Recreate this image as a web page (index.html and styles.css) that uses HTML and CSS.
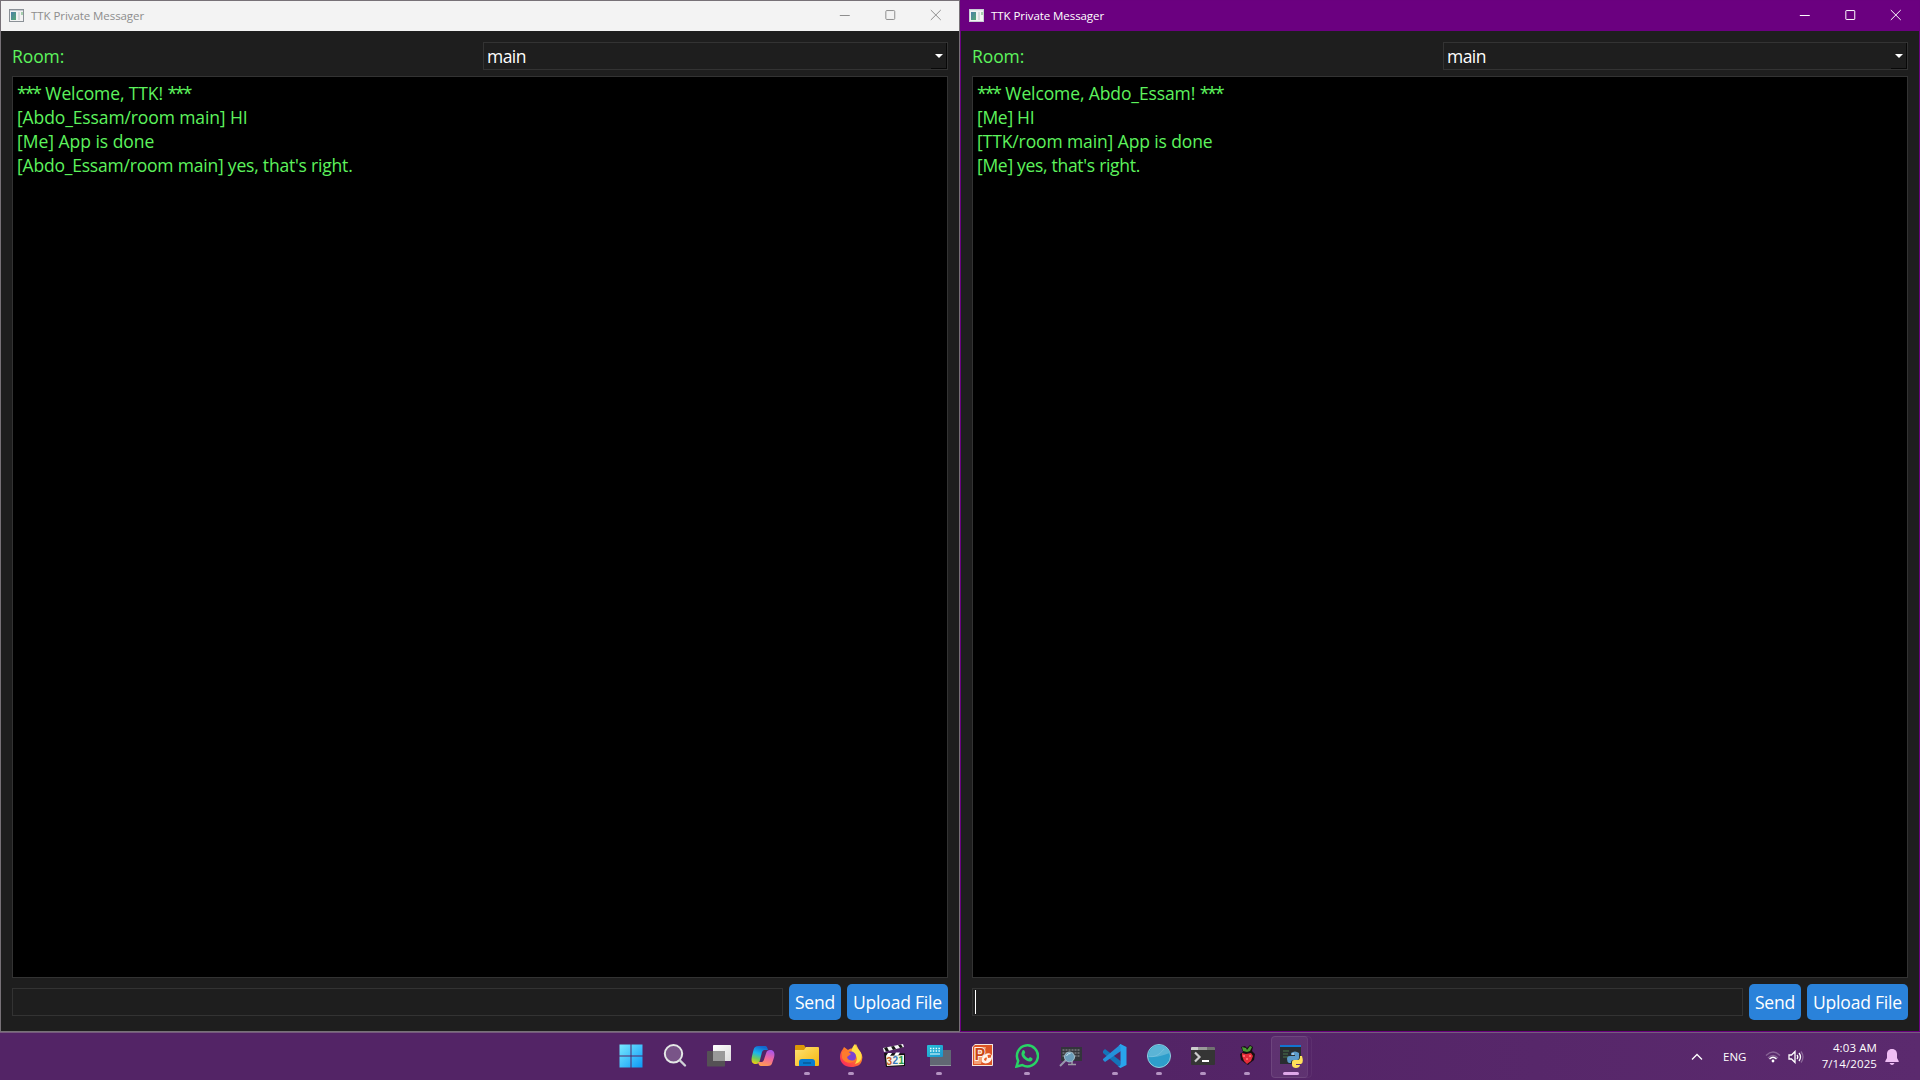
FILE: index.html
```
<!DOCTYPE html>
<html lang="en">
<head>
<meta charset="utf-8">
<title>TTK Private Messager</title>
<link rel="stylesheet" href="styles.css">
</head>
<body>
<div class="desktop">
  <main class="windows">
    <section class="window inactive">
      <header class="titlebar">
        <svg class="app-icon" viewBox="0 0 15 13"><rect x=".5" y=".5" width="14" height="12" fill="#f3f3f3" stroke="#8b9197"/><path d="M1 1.5h13" stroke="#c5cbd2"/><rect x="2" y="3" width="5" height="8" fill="url(#appg)"/><path d="M9 3h2v8H9z" fill="#d9dcde"/><path d="M12 3h2v3h-2z" fill="#a6cfae"/></svg>
        <h1 class="title">TTK Private Messager</h1>
        <div class="controls">
          <svg class="control" viewBox="0 0 46 30"><path d="M18 14.500h10"/></svg>
          <svg class="control" viewBox="0 0 46 30"><rect x="18" y="9.500" width="9" height="9" rx="1"/></svg>
          <svg class="control" viewBox="0 0 46 30"><path d="M18 9l10 10M28 9L18 19"/></svg>
        </div>
      </header>
      <div class="client">
        <div class="room-row">
          <label class="room-label">Room:</label>
          <div class="combo">main<span class="drop"></span></div>
        </div>
        <div class="chat">
          <p class="wide"><span class="stars">***</span> Welcome, TTK! <span class="stars">***</span></p>
          <p class="wide">[Abdo_Essam/room main] HI</p>
          <p class="wider">[Me] App is done</p>
          <p class="long">[Abdo_Essam/room main] yes, that's right.</p>
        </div>
        <div class="send-row">
          <div class="entry"></div>
          <button class="btn send">Send</button>
          <button class="btn upload">Upload File</button>
        </div>
      </div>
    </section>
    <section class="window active">
      <header class="titlebar">
        <svg class="app-icon" viewBox="0 0 15 13"><rect x=".5" y=".5" width="14" height="12" fill="#f3f3f3" stroke="#c9ced4"/><path d="M1 1.500h13" stroke="#e5e9ec"/><rect x="2" y="3" width="5" height="8" fill="url(#appg)"/><path d="M9 3h2v8H9z" fill="#d9dcde"/><path d="M12 3h2v3h-2z" fill="#a6cfae"/></svg>
        <h1 class="title">TTK Private Messager</h1>
        <div class="controls">
          <svg class="control" viewBox="0 0 46 30"><path d="M18 14.500h10"/></svg>
          <svg class="control" viewBox="0 0 46 30"><rect x="18" y="9.500" width="9" height="9" rx=".5"/></svg>
          <svg class="control" viewBox="0 0 46 30"><path d="M18 9l10 10M28 9L18 19"/></svg>
        </div>
      </header>
      <div class="client">
        <div class="room-row">
          <label class="room-label">Room:</label>
          <div class="combo">main<span class="drop"></span></div>
        </div>
        <div class="chat">
          <p class="wide"><span class="stars">***</span> Welcome, Abdo_Essam! <span class="stars">***</span></p>
          <p>[Me] HI</p>
          <p class="wide">[TTK/room main] App is done</p>
          <p>[Me] yes, that's right.</p>
        </div>
        <div class="send-row">
          <div class="entry"><span class="caret"></span></div>
          <button class="btn send">Send</button>
          <button class="btn upload">Upload File</button>
        </div>
      </div>
    </section>
  </main>

  <footer class="taskbar">
    <div class="tray-spacer"></div>
    <nav class="apps">
      <div class="app"><svg viewBox="0 0 24 24"><path fill="url(#win)" d="M.5.500h11v11H.5zM12.500.500h11v11h-11zM.5 12.500h11v11H.5zM12.500 12.500h11v11h-11z"/></svg></div>
      <div class="app"><svg viewBox="0 0 24 24"><circle cx="10.500" cy="9.800" r="8.700" fill="#795488" stroke="#e4e8e6" stroke-width="2"/><path d="M17 16.500l5 5" stroke="#cfd1d6" stroke-width="2.400" stroke-linecap="round"/></svg></div>
      <div class="app"><svg viewBox="0 0 24 24"><rect x="6" y="1" width="18" height="16" rx=".7" fill="url(#white)"/><rect y="7" width="18" height="15.500" rx=".7" fill="#555155"/><path d="M6 7h12v10H6z" fill="#999"/></svg></div>
      <div class="app"><svg viewBox="0 0 24 24"><path d="M7.500 2H14c1.800 0 2.300 1.200 3 4h-3c-2 0-2.800 1-3.500 4L9 16c-.8 3-2 4-4 4-4.500 0-5-3.500-4-8l1.500-6c.8-3 2-4 5-4z" fill="url(#cpa)"/><path d="M16.500 22H10c-1.800 0-2.300-1.200-3-4h3c2 0 2.800-1 3.500-4L15 9.500c.8-3 2-3.500 4-3.500 4.500 0 5 3.500 4 7.500L21.500 18c-.8 3-2 4-5 4z" fill="url(#cpb)"/></svg></div>
      <div class="app"><svg viewBox="0 0 24 24"><path d="M0 2q0-1 1-1h8l2 3v5H0z" fill="#dc9807"/><path d="M0 6h9l2-3h12q1 0 1 1v17q0 1-1 1H1q-1 0-1-1z" fill="url(#folder)"/><path d="M4 22v-4q0-3 3-3h10q3 0 3 3v4z" fill="#087bd0"/><path d="M8 19h8" stroke="#075796" stroke-width="1.500"/></svg><i></i></div>
      <div class="app"><svg viewBox="0 0 24 24"><path d="M5 3l4 3c1-1 4-2 6-1 0-2 1-4 2-5l3 6c3 3 4 7 3 10-1 5-5 7-11 7S1 19 1 13c0-3 1-6 3-8z" fill="url(#fire)"/><path d="M16 0c1 5 7 6 6.500 13-.5 4-3 6-6.500 7 4-6 1-10-3-11-1-4 1-7 3-9z" fill="#ffdf48"/><circle cx="12" cy="12.500" r="5" fill="#7b43d2"/><path d="M3 8c3-2 6-1 9 2l-4 3c1 4 5 4 8 3-2 4-10 4-13-2z" fill="#ff7a2d"/></svg><i></i></div>
      <div class="app"><svg viewBox="0 0 24 24"><path d="M1 9l21 .5V22L3 23z" fill="#111"/><path d="M3 12l18-1v10L4 22z" fill="#f8f5e7"/><path d="M0 4L20 0l1 3L1 8z" fill="#f8f8f8"/><path d="M1 4l3-1 2 4-3 .5zM8 2.500l3-.5 2 3-3 1zM15 1l3-.5 2 3-3 .5z" fill="#171717"/><path d="M5 9h4l-2 3H3zM13 8.500h4l-2 3h-4z" fill="#fff"/><g font-family="Liberation Sans, sans-serif" font-size="10" font-weight="bold"><text x="3.500" y="20.500" fill="#c75c24">3</text><text x="9.500" y="20.200" fill="#3676bb">2</text><text x="15.500" y="20" fill="#2c9b46">1</text></g></svg></div>
      <div class="app"><svg viewBox="0 0 24 24"><rect x="3" y="6" width="21" height="16" fill="#616773"/><path d="M3 21.500h21" stroke="#9395a0"/><rect y="1" width="16" height="12" rx="1" fill="url(#cyan)"/><path d="M3 4.500h10M3 7h10" stroke="#e9ffff" stroke-width="1.300" stroke-dasharray="1.500 1.300"/><path d="M3 10h10" stroke="#e9ffff"/></svg><i></i></div>
      <div class="app"><svg viewBox="0 0 24 24"><path d="M1 3l3-3h18v21q0 1-1 1H1z" fill="#f1e6df"/><path d="M2 3l2-2h17v20H2z" fill="#dd5524"/><path d="M3 3h12l-5 17H3z" fill="#f3a176"/><path d="M11 14c3-6 10-6 10-1 0 6-7 8-10 5z" fill="#fff3ea"/><path d="M13 16c0-2 2-3 3-2l-1 3zM16.500 11l3.500-.5v3l-3 .5z" fill="#e95a24"/><text x="3.500" y="16" fill="#c94614" stroke="#fff" stroke-width="1.500" paint-order="stroke" font-family="Liberation Sans, sans-serif" font-size="16" font-weight="bold">P</text></svg></div>
      <div class="app"><svg viewBox="0 0 24 24"><path d="M1.500 22.500l1.700-5.700A10.500 10.500 0 1 1 7.300 21z" fill="none" stroke="#28d366" stroke-width="2.500"/><path d="M7.500 6.500c1-.8 2-.5 2.700 2l-.9 2c1 2 2.200 3.200 4.200 4l1.500-1.500c2.500 1 2.700 1.300 2.500 2.500-.8 2.500-3.500 2.500-6 1-3-1.500-5.500-4.500-5-7.500z" fill="#28d366"/></svg><i></i></div>
      <div class="app"><svg viewBox="0 0 24 24"><path d="M2 3h21v14H2z" fill="#33353b"/><path d="M3.500 6h18M3.500 9h18M3.500 12h18" stroke="#66676d" stroke-width="2" stroke-dasharray="2 1"/><path d="M9 20.500h8M13 17v3" stroke="#9c9aa6" stroke-width="1.500"/><path d="M7 16l-6 6" stroke="#9999ae" stroke-width="2"/><circle cx="10.500" cy="13" r="5" fill="#6b9dba" stroke="#a5bfcb"/><path d="M7.500 12q1-3 4-2.500" fill="none" stroke="#c8e0ea"/></svg></div>
      <div class="app"><svg viewBox="0 0 24 24"><path d="M0 7l2-2 15.500 12V24L0 9z" fill="#1474b9"/><path d="M0 16l2 2L18 7V0L0 15z" fill="#2491da"/><path d="M17.500 0l6 3v18l-6 3-3-2q3 1 3-2V3q0-2-2-1z" fill="#29a4ec"/></svg><i></i></div>
      <div class="app"><svg viewBox="0 0 24 24"><circle cx="12" cy="12" r="11.500" fill="#2d9ecb" stroke="#93cede"/><path d="M1.500 12.500C8 14 15 12 22.800 9 21 4 17 1.300 12 1.300 6 1.300 1.500 6 1.500 12.500z" fill="#5bb4d6"/><path d="M1.500 12.500C8 13.500 12 11 17 5" fill="none" stroke="#83c8e1" stroke-width=".6"/></svg><i></i></div>
      <div class="app"><svg viewBox="0 0 24 24"><rect y="3" width="24" height="18" rx="1" fill="#353535"/><path d="M0 6V4q0-1 1-1h6v3z" fill="#ccc"/><path d="M7 3h9v3H7z" fill="#999"/><path d="M16 3h7q1 0 1 1v2h-8z" fill="#717171"/><path d="M4 8.500l4.500 4.500L4 17.500" fill="none" stroke="#ccc" stroke-width="2.200"/><path d="M11 17h7" stroke="#fff" stroke-width="2"/></svg><i></i></div>
      <div class="app"><svg viewBox="0 0 24 24"><path d="M6 3l4-1 2 2 3-3 3 2-1 4 3 3-1 6-4 3-2 2-3-2-4-3-1-6 3-2z" fill="#160e12"/><path d="M7 3l4 1 1 2 3-4 2 1-2 4-3 1-4-1z" fill="#4c9c35"/><path d="M7 9l4 1 5-1 2 3-2 5-4 3-3-3-2-5z" fill="#e42d39"/><path d="M8 11h2v2H8zM14 11h2v2h-2zM11 14h2v2h-2z" fill="#ff656a"/></svg><i></i></div>
      <div class="app current"><svg viewBox="0 0 24 24"><rect x="1" y="1" width="21" height="19" fill="#292d30"/><path d="M1 1h21v2H1z" fill="#1275d0"/><path d="M4 7h6M4 10h5M4 13h6" stroke="#3f5d43" stroke-width="1.500"/><path d="M12 9q4-3 8 0v5q0 2-2 2h-4q-2 0-2 3h-2q-2-1-2-4t3-3h5v-1h-4z" fill="#5c9aca"/><path d="M21 12h2q2 7-1 8h-5v1h4c0 4-8 4-8 0v-3q0-2 2-2h4q2 0 2-4z" fill="#ffe15a"/><circle cx="14" cy="10" r=".8" fill="#fff"/></svg><i></i></div>
    </nav>
    <div class="tray">
      <svg class="chevron" viewBox="0 0 12 8"><path d="M1 6.500l5-5 5 5"/></svg>
      <span class="lang">ENG</span>
      <svg class="wifi" viewBox="0 0 16 14"><path d="M1 5.500q7-7 14 0M3 8q5-5 10 0" opacity=".28"/><path d="M4.500 9q3.500-3.500 7 0"/><circle cx="8" cy="11" r="1.400"/></svg>
      <svg class="volume" viewBox="0 0 16 14"><path d="M1 5h2.500L7 1.500v11L3.500 9H1zM9 5q1.500 2 0 4M11 3q3 4 0 8"/><path d="M13 1.500q4 5.500 0 11" opacity=".3"/></svg>
      <div class="clock"><span class="time">4:03 AM</span><span class="date">7/14/2025</span></div>
      <svg class="bell" viewBox="0 0 14 16"><path d="M7 0C3.500 0 2 2.500 2 5v4L.3 12v1h13.400v-1L12 9V5c0-2.500-1.500-5-5-5zM4.500 14h5q-1 2-2.500 2t-2.500-2z"/></svg>
    </div>
  </footer>
</div>
<svg class="defs" width="0" height="0"><defs>
  <linearGradient id="appg" x2="1" y2="1"><stop stop-color="#4b7fa8"/><stop offset="1" stop-color="#58a975"/></linearGradient>
  <linearGradient id="win" x2="1" y2="1"><stop stop-color="#79eaff"/><stop offset="1" stop-color="#0c98f7"/></linearGradient>
  <linearGradient id="white" x2="1" y2="1"><stop stop-color="#fff"/><stop offset="1" stop-color="#dcdcdc"/></linearGradient>
  <linearGradient id="cpa" x1=".5" x2=".2" y2="1"><stop stop-color="#1268d0"/><stop offset=".4" stop-color="#19b4ee"/><stop offset=".7" stop-color="#6fc95c"/><stop offset="1" stop-color="#f4d10a"/></linearGradient>
  <linearGradient id="cpb" x1=".7" x2=".4" y2="1"><stop stop-color="#a655ed"/><stop offset=".5" stop-color="#f0669e"/><stop offset="1" stop-color="#ff9a54"/></linearGradient>
  <linearGradient id="folder" x2="1" y2="1"><stop stop-color="#ffe375"/><stop offset="1" stop-color="#f6b60c"/></linearGradient>
  <linearGradient id="fire" x1="1" x2=".2" y2="1"><stop stop-color="#ffe54e"/><stop offset=".5" stop-color="#ff7d27"/><stop offset="1" stop-color="#fb255f"/></linearGradient>
  <linearGradient id="cyan" x2="1" y2="1"><stop stop-color="#27c0da"/><stop offset="1" stop-color="#1c94cb"/></linearGradient>
</defs></svg>
</body>
</html>
```
FILE: styles.css
```
* { box-sizing: border-box; }
body { margin: 0; overflow: hidden; font-family: "Open Sans", "Noto Sans", sans-serif; }
.desktop { width: 1920px; height: 1080px; display: grid; grid-template-rows: 1032px 48px; }
.windows { display: grid; grid-template-columns: 1fr 1fr; }
.window { display: grid; grid-template-rows: 30px 1fr; border: 1px solid #777177; background: #1e1e1e; }
.window.active { border-color: #6a007f; }

.titlebar { display: flex; align-items: center; background: #f3f3f3; color: #8d8d8d; padding-left: 8px; }
.active .titlebar { background: #6b0080; color: #fff; }
.app-icon { width: 15px; height: 13px; margin-bottom: 1px; }
.title { margin: 0 0 0 7px; font-size: 11.5px; line-height: 30px; font-weight: 400; white-space: nowrap; letter-spacing: -.07px; }
.controls { display: flex; margin-left: auto; }
.control { width: 45.600px; height: 30px; fill: none; stroke: #8d8d8d; stroke-width: 1; }
.active .control { stroke: #fff; }

.client { display: grid; grid-template-rows: 28px 902px 36px; gap: 6px; padding: 11px; }
.room-row { display: grid; grid-template-columns: 465px 465px; gap: 6px; }
.room-label { color: #5df35d; font-size: 17.500px; line-height: 28px; letter-spacing: -.08px; }
.combo { display: flex; justify-content: space-between; border: 1px solid #333; color: #fff; padding-left: 3px; font-size: 17.500px; line-height: 26px; letter-spacing: -.55px; }
.drop { width: 16px; height: 26px; display: grid; place-items: center; border-right: 1px solid #080808; border-bottom: 1px solid #080808; }
.drop::after { content: ""; border: 4px solid transparent; border-top-color: #fff; border-bottom: 0; }
.chat { border: 1px solid #333; background: #000; color: #5df35d; padding: 4px; }
.chat p { margin: 0; font-size: 17.500px; line-height: 24px; white-space: nowrap; letter-spacing: -.3px; }
.chat .long { letter-spacing: -.2px; }
.chat .wide { letter-spacing: -.11px; }
.chat .wider { letter-spacing: -.02px; }
.chat .stars { letter-spacing: -2px; margin-right: 1px; }
.send-row { display: grid; grid-template-columns: 771px 52px 101px; gap: 6px; align-items: center; }
.entry { height: 28px; border: 1px solid #333; padding: 1px 2px; }
.caret { display: block; width: 1px; height: 24px; background: #fff; }
.btn { height: 36px; border: 0; border-radius: 5px; padding: 0; background: #2a82da; color: #fff; font: 17.500px/36px "Open Sans", "Noto Sans", sans-serif; letter-spacing: -.2px; white-space: nowrap; }

.taskbar { display: grid; grid-template-columns: 609px 704px 1fr; border-top: 1px solid #765a7e; background: linear-gradient(90deg, #532466, #532466 60%, #5b2a6e); color: #fff; }
.apps { display: grid; grid-template-columns: repeat(16, 44px); }
.app { display: grid; grid-template-rows: 24px 3px; row-gap: 4px; justify-items: center; padding-top: 11px; }
.app svg { width: 24px; height: 24px; }
.app i { width: 6px; height: 3px; border-radius: 2px; background: #b493c2; }
.current { position: relative; }
.current::before, .current::after { content: ""; position: absolute; top: 3px; height: 40px; border-radius: 4px; background: #ffffff10; border: 1px solid #ffffff0c; }
.current::before { left: 2px; width: 35px; }
.current::after { left: 2px; width: 39px; background: none; }
.current svg { z-index: 1; }
.current i { width: 16px; background: #dda3e8; }

.tray { display: flex; align-items: center; justify-content: flex-end; padding-right: 21px; }
.tray svg { fill: none; stroke: #fff; stroke-width: 1.300; }
.chevron { width: 12px; height: 8px; margin-right: 20px; }
.lang { width: 24px; font-size: 11.500px; margin-right: 18px; letter-spacing: 0; }
.wifi { width: 16px; height: 14px; margin-right: 7px; }
.wifi circle { fill: #fff; stroke: none; }
.volume { width: 16px; height: 14px; margin-right: 16px; }
.clock { display: flex; flex-direction: column; align-items: flex-end; width: 57px; font-size: 11.500px; line-height: 16px; white-space: nowrap; letter-spacing: .1px; margin-top: -1px; }
.tray .bell { width: 14px; height: 16px; margin-left: 8px; fill: #efbdf4; stroke: none; }
.defs { position: absolute; }
```
